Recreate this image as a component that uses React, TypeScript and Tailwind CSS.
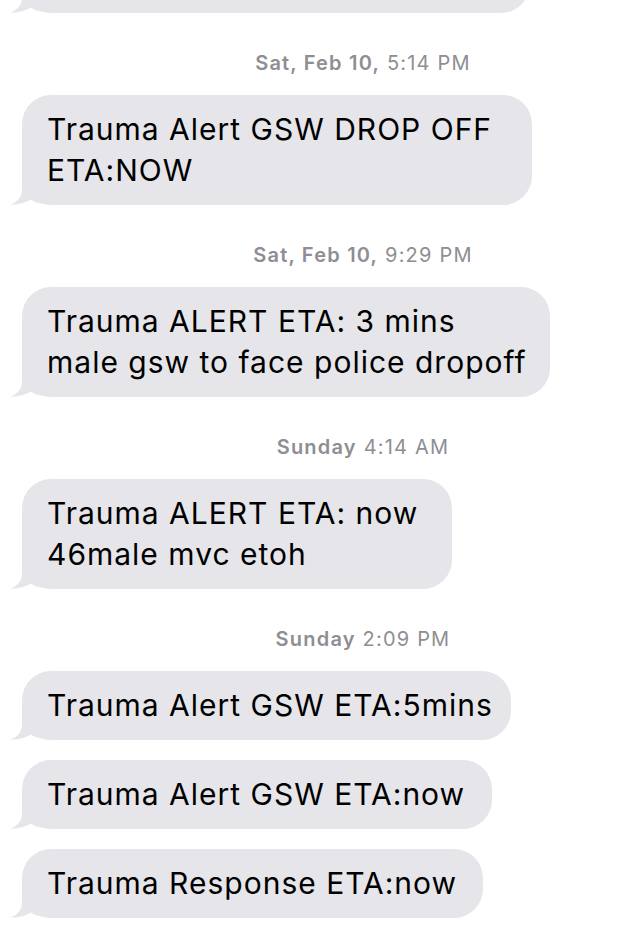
import React from 'react';

type Msg = { lines: string[]; width: number };

function Tail() {
  return (
    <svg
      className="absolute left-[-12px] bottom-0"
      width="50"
      height="31"
      viewBox="0 0 50 31"
    >
      <path
        d="M12 0 L12 15 C12 23 8 28 0 30.5 C8 31 15 29 21 25.5 C26 29 32 30 40 30 L50 30 L50 0 Z"
        fill="#e5e5ea"
      />
    </svg>
  );
}

function Bubble({ lines, width }: Msg) {
  return (
    <div
      className="relative bg-[#e5e5ea] rounded-[29px] pl-[25px] py-[14px] text-[30px] leading-[41px] tracking-[1px] text-black"
      style={{ width }}
    >
      <Tail />
      <div className="relative">
        {lines.map((l, i) => (
          <div key={i} className="whitespace-nowrap">
            {l}
          </div>
        ))}
      </div>
    </div>
  );
}

function Stamp({ day, time }: { day: string; time: string }) {
  return (
    <div className="w-full pl-[60px] text-center mt-[38px] mb-[20px] text-[20px] leading-[24px] tracking-[1.2px] text-[#8e8e93]">
      <span className="font-semibold">{day}</span> {time}
    </div>
  );
}

export default function App() {
  return (
    <div
      className="w-full h-[950px] overflow-hidden bg-white flex flex-col items-start pl-[22px]"
      style={{ fontFamily: 'Inter, "Liberation Sans", Arial, sans-serif' }}
    >
      <div className="-mt-[97px] relative bg-[#e5e5ea] rounded-[29px] w-[508px] h-[110px]">
        <Tail />
      </div>

      <Stamp day="Sat, Feb 10," time="5:14 PM" />
      <Bubble lines={['Trauma Alert GSW DROP OFF', 'ETA:NOW']} width={510} />

      <Stamp day="Sat, Feb 10," time="9:29 PM" />
      <Bubble lines={['Trauma ALERT ETA: 3 mins', 'male gsw to face police dropoff']} width={528} />

      <Stamp day="Sunday" time="4:14 AM" />
      <Bubble lines={['Trauma ALERT ETA: now', '46male mvc etoh']} width={430} />

      <Stamp day="Sunday" time="2:09 PM" />
      <Bubble lines={['Trauma Alert GSW ETA:5mins']} width={489} />
      <div className="h-[20px]" />
      <Bubble lines={['Trauma Alert GSW ETA:now']} width={470} />
      <div className="h-[20px]" />
      <Bubble lines={['Trauma Response ETA:now']} width={461} />
    </div>
  );
}
